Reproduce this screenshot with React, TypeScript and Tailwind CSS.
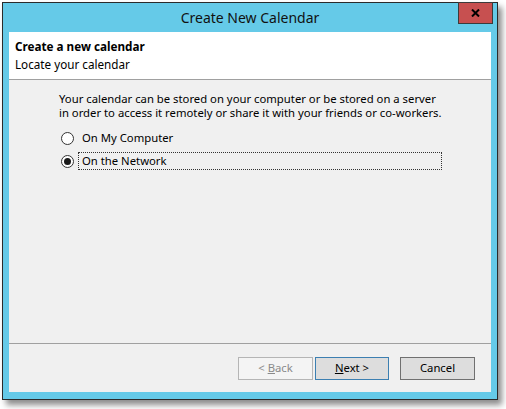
import React from "react";

const font = { fontFamily: '"Noto Sans", "Open Sans", sans-serif' };

function Radio({ checked }: { checked?: boolean }) {
  return (
    <span className="flex h-[13px] w-[13px] items-center justify-center rounded-full border border-[#333333] bg-white">
      {checked && <span className="h-[7px] w-[7px] rounded-full bg-[#1a1a1a]" />}
    </span>
  );
}

export default function App() {
  return (
    <div className="h-[409px] w-[506px] overflow-hidden bg-white pl-[2px] pt-[2px]" style={font}>
      {/* window frame */}
      <div className="relative flex h-[398px] w-[496px] flex-col border border-[#2b2b2b] bg-[#65cae8] px-[6px] pb-[7px] shadow-[4px_5px_6px_rgba(0,0,0,0.45)]">
        <div className="flex h-[29px] items-center justify-center pb-[1px] text-[14px] text-[#111]">
          Create New Calendar
        </div>
        <div className="absolute right-[4px] top-[-1px] flex h-[22px] w-[35px] items-center justify-center border border-[#3b3b3b] bg-[#c75050]">
          <svg width="9" height="8" viewBox="0 0 9 8">
            <path d="M1 0.5 L8 7.5 M8 0.5 L1 7.5" stroke="#000" strokeWidth="2" />
          </svg>
        </div>

        {/* client area */}
        <div className="flex flex-1 flex-col bg-[#f0f0f0] text-[11.3px] text-black">
          <div className="h-[48px] border-b border-[#a0a0a0] bg-white pl-[6px] pt-[5px] text-[11.7px] leading-[18px]">
            <div className="font-bold">Create a new calendar</div>
            <div>Locate your calendar</div>
          </div>

          <div className="flex flex-1 flex-col pl-[50px] pt-[12px]">
            <p className="leading-[14px]">
              Your calendar can be stored on your computer or be stored on a server
              <br />
              in order to access it remotely or share it with your friends or co-workers.
            </p>
            <div className="mt-[9px] flex h-[18px] items-center">
              <span className="ml-[2px]">
                <Radio />
              </span>
              <span className="ml-[6px] px-[2px]">On My Computer</span>
            </div>
            <div className="mt-[5px] flex h-[18px] items-center">
              <span className="ml-[2px]">
                <Radio checked />
              </span>
              <span className="ml-[4px] flex h-[18px] w-[364px] items-center border border-dotted border-[#333] px-[3px]">
                On the Network
              </span>
            </div>
          </div>

          <div className="border-t border-[#a0a0a0]" />
          <div className="flex h-[48px] items-start justify-end pr-[16px] pt-[13px]">
            <button className="h-[23px] w-[75px] border border-[#b5b5b5] bg-[#f4f4f4] text-[#8a8a8a]">
              &lt; <span className="underline">B</span>ack
            </button>
            <button className="ml-[2px] h-[23px] w-[74px] border border-[#3c7fb1] bg-[#dddddd]">
              <span className="underline">N</span>ext &gt;
            </button>
            <button className="ml-[11px] h-[23px] w-[75px] border border-[#707070] bg-[#dddddd]">
              Cancel
            </button>
          </div>
        </div>
      </div>
    </div>
  );
}
